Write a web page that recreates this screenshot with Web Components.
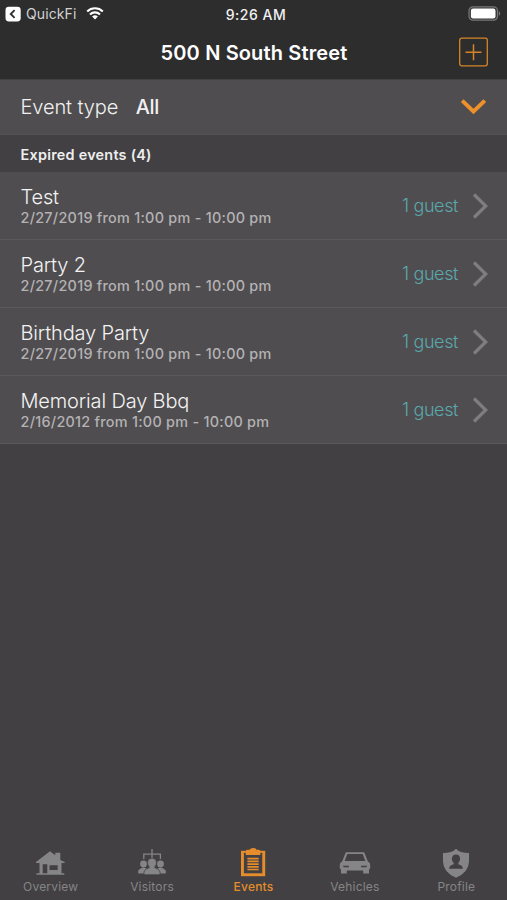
<!DOCTYPE html>
<html lang="en">
<head>
<meta charset="utf-8">
<title>Events</title>
<style>
html,body{margin:0;height:100%;background:#424042}
body{font-family:Inter,"Liberation Sans",sans-serif;color:#f1f1f1;overflow:hidden}
</style>
</head>
<body>
<events-app></events-app>
<script>
const define = (name, html) => customElements.define(name, class extends HTMLElement {
  constructor() {
    super();
    this.attachShadow({mode: 'open'}).innerHTML = html;
  }
});

define('status-bar', `<style>
:host{display:grid;grid-template-columns:1fr auto 1fr;align-items:center;height:28px;padding:0 6px 0 5px;box-sizing:border-box;white-space:nowrap}
.left{display:flex;align-items:center}
.back{font-size:14px;line-height:16px;color:#d2d2d2;margin:0 10px 0 5px;letter-spacing:.1px;padding-bottom:1px}
.time{font-size:14px;font-weight:500;letter-spacing:.5px;padding-left:6px}
.battery{justify-self:end}
svg{display:block}
</style>
<div class="left">
<svg width="16" height="16" viewBox="0 0 16 16"><rect x=".5" y=".7" width="15.2" height="14.8" rx="3.4" fill="#fff"/><path d="M9.6 4.1 5.7 8l3.9 3.9" fill="none" stroke="#2d2d2d" stroke-width="1.8"/></svg>
<span class="back">QuickFi</span>
<svg width="18" height="14" viewBox="0 0 18 14" fill="none" stroke="#fff" stroke-width="2.1"><path d="M1.2 4.400a11.2 11.2 0 0 1 15.6 0M4 7.400a7.2 7.2 0 0 1 10 0"/><path d="M6.1 9.600a4.2 4.2 0 0 1 5.8 0L9 12.500z" fill="#fff" stroke="none"/></svg>
</div>
<span class="time">9:26 AM</span>
<svg class="battery" width="33" height="16" viewBox="0 0 33 16"><rect x="1" y=".8" width="28.5" height="13.4" rx="4" fill="#353535" stroke="#777" stroke-width="1.2"/><rect x="2.9" y="2.600" width="24.6" height="9.8" rx="2.2" fill="#fff"/><path d="M30.8 5.200c1.8.5 1.8 4.1 0 4.6z" fill="#777"/></svg>`);

define('title-bar', `<style>
:host{display:grid;grid-template-columns:1fr auto 1fr;align-items:center;height:51px;padding:0 18px 3px 19px;box-sizing:border-box}
h1{grid-column:2;margin:0;font-size:20px;line-height:24px;font-weight:600;letter-spacing:.14px;white-space:nowrap;color:#fff;padding-top:1px}
svg{justify-self:end;display:block}
</style><h1><slot></slot></h1>
<svg width="30" height="30" viewBox="0 0 30 30" fill="none" stroke="#d58428"><rect x=".7" y="1.2" width="27.6" height="27.6" rx="2" stroke-width="1.3"/><path d="M6.500 15.200h16M14.500 7.200v16" stroke-width="1.5"/></svg>`);

define('event-filter', `<style>
:host{display:flex;align-items:center;height:56px;padding:0 20px 0 20.5px;box-sizing:border-box;background:#4f4d4f;border-top:1px solid #424042;border-bottom:1px solid #545254;white-space:nowrap}
.label{font-size:20px;font-weight:300;letter-spacing:-.1px}
.value{font-size:20px;font-weight:500;margin-left:17.5px;letter-spacing:-.3px}
svg{margin-left:auto}
</style><span class="label">Event type</span><span class="value"><slot></slot></span>
<svg width="27" height="18" viewBox="0 0 27 18"><path d="M2.2 2.6 13.5 13.4 24.8 2.6" fill="none" stroke="#ee902b" stroke-width="4"/></svg>`);

define('section-title', `<style>
:host{display:flex;align-items:center;height:37px;padding:1px 20.5px 0;box-sizing:border-box;background:#424042;font-size:14.4px;font-weight:600;letter-spacing:.25px;color:#eee}
</style><span><slot></slot></span>`);

define('event-row', `<style>
:host{display:flex;align-items:center;height:68px;padding:0 18px 0 20.5px;box-sizing:border-box;background:#4f4d4f;border-bottom:1px solid #5a585a;white-space:nowrap}
.text{flex:1}
.name{display:block;font-size:20px;line-height:24px;font-weight:300;color:#f3f3f3;letter-spacing:-.15px}
.date{display:block;font-size:14.4px;line-height:17px;font-weight:500;color:#b4b2b4;letter-spacing:.27px}
.guests{font-size:18px;font-weight:300;color:#59a8ad;letter-spacing:-.4px}
svg{margin-left:13px}
</style><div class="text"><slot class="name" name="name"></slot><slot class="date" name="date"></slot></div>
<slot class="guests" name="guests"></slot>
<svg width="18" height="28" viewBox="0 0 18 28"><path d="M3 2.5 14.7 14 3 25.5" fill="none" stroke="#7f7d7f" stroke-width="3.2"/></svg>`);

define('tab-item', `<style>
:host{display:flex;flex-direction:column;align-items:center;color:#858487;font-size:12px;line-height:16px;letter-spacing:.2px;font-weight:400}
:host([active]){color:#e58d2d;font-weight:500}
slot[name=icon]{display:block;height:32px;margin-bottom:1px}
</style><slot name="icon"></slot><span><slot></slot></span>`);

define('tab-bar', `<style>
:host{display:grid;grid-template-columns:repeat(5,1fr);height:54px;background:#424042}
svg{display:block}
</style>
<tab-item><svg slot="icon" width="32" height="32" viewBox="0 0 32 32" fill="currentColor"><path d="M1 16 15 5.2l5.3 4V6.7h5v7.2L29.7 16v.9H1z"/><path fill-rule="evenodd" d="M4.5 16.5h22v10.8h2.8v1.5H1.5v-1.5h3zm3.2 1.8v9h4.6v-9zm6.8 1v4.6h8.2v-4.6z"/></svg>Overview</tab-item>
<tab-item><svg slot="icon" width="32" height="32" viewBox="0 0 32 32" fill="currentColor"><path d="M7.8 13V8.2h16.6V13M16 3v10" fill="none" stroke="currentColor" stroke-width="1.3"/><circle cx="7.5" cy="18" r="3.4"/><circle cx="24.5" cy="18" r="3.4"/><path d="M2.2 27.5v-2.2q0-2.3 5.3-3.7 5.2 1.4 5.2 3.7v2.2zM19.3 27.5v-2.2q0-2.3 5.2-3.7 5.3 1.4 5.3 3.7v2.2z"/><path d="M16 12.2c5.3 0 5.4 6 2.5 9 .3 1.2 5.5 1.8 5.5 5v2.500H8v-2.500c0-3.200 5.200-3.800 5.500-5-2.900-3-2.800-9 2.500-9z" stroke="#424042" stroke-width=".7"/></svg>Visitors</tab-item>
<tab-item active><svg slot="icon" width="32" height="32" viewBox="0 0 32 32"><path d="M4 4.8h24.2v25.4H4z" fill="currentColor"/><path d="M6.900 6.800h18.400v20.500H6.900z" fill="#424042"/><path d="M8.800 9V5.300q0-1.600 1.700-1.600h2.200q.6-1.800 3.400-1.800t3.400 1.800h2.200q1.700 0 1.700 1.600V9z" fill="currentColor"/><path d="M10.400 12.700h11.300M10.400 15.400h11.300M10.400 18.100h11.300M10.400 20.800h11.300M10.400 23.500h11.300" stroke="currentColor" stroke-width="1.700"/></svg>Events</tab-item>
<tab-item><svg slot="icon" width="32" height="32" viewBox="0 0 32 32" fill="currentColor"><path fill-rule="evenodd" d="M6.8 6.3h18.400l3.700 9.100q2.300 1 2.300 3.400v3.300l-1.200 1.600v3.700h-5.800v-3H7.800v3H2v-3.700L.8 22.100v-3.300q0-2.400 2.300-3.400zm1.500 1.700-2.600 7h20.600l-2.600-7z"/><path d="M3.500 19.700h6.400v1.600H5zM28.500 19.700h-6.400v1.600H27z" fill="#424042"/></svg>Vehicles</tab-item>
<tab-item><svg slot="icon" width="32" height="32" viewBox="0 0 32 32"><path d="M16 2.700q3.800 4.400 13 4.400v8.400q0 10.500-13 16.200Q3 26 3 15.500V7.100Q12.200 7.100 16 2.700z" fill="currentColor"/><path d="M16 8.400c5.200 0 4.800 6.500 2.300 8.300v1.500q4.600 1.100 4.600 4.600H9.100q0-3.500 4.600-4.600v-1.500c-2.500-1.800-2.900-8.300 2.300-8.300z" fill="#424042"/></svg>Profile</tab-item>`);

define('events-app', `<style>
:host{display:flex;flex-direction:column;width:100%;height:100vh;background:#424042}
header{background:#2d2d2d}
main{flex:1;min-height:0}
</style>
<header><status-bar></status-bar><title-bar>500 N South Street</title-bar></header>
<main>
<event-filter>All</event-filter>
<section-title>Expired events (4)</section-title>
<event-row><span slot="name">Test</span><span slot="date">2/27/2019 from 1:00 pm - 10:00 pm</span><span slot="guests">1 guest</span></event-row>
<event-row><span slot="name">Party 2</span><span slot="date">2/27/2019 from 1:00 pm - 10:00 pm</span><span slot="guests">1 guest</span></event-row>
<event-row><span slot="name">Birthday Party</span><span slot="date">2/27/2019 from 1:00 pm - 10:00 pm</span><span slot="guests">1 guest</span></event-row>
<event-row><span slot="name">Memorial Day Bbq</span><span slot="date">2/16/2012 from 1:00 pm - 10:00 pm</span><span slot="guests">1 guest</span></event-row>
</main>
<tab-bar></tab-bar>`);
</script>
</body>
</html>
